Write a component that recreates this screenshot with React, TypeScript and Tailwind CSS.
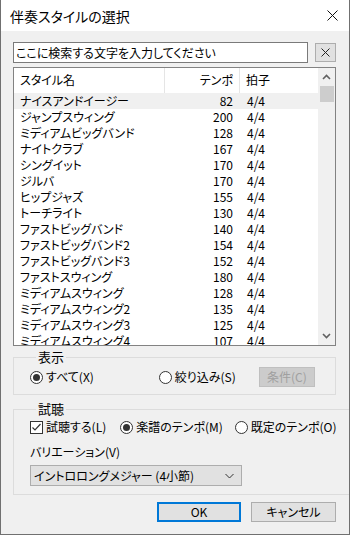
import React from "react";

const rows: [string, number][] = [
  ["ナイスアンドイージー", 82],
  ["ジャンプスウィング", 200],
  ["ミディアムビッグバンド", 128],
  ["ナイトクラブ", 167],
  ["シングイット", 170],
  ["ジルバ", 170],
  ["ヒップジャズ", 155],
  ["トーチライト", 130],
  ["ファストビッグバンド", 140],
  ["ファストビッグバンド2", 154],
  ["ファストビッグバンド3", 152],
  ["ファストスウィング", 180],
  ["ミディアムスウィング", 128],
  ["ミディアムスウィング2", 135],
  ["ミディアムスウィング3", 125],
  ["ミディアムスウィング4", 107],
];

function Radio({ checked, label }: { checked?: boolean; label: string }) {
  return (
    <div className="flex shrink-0 items-center gap-[3px]">
      <span className="flex h-[13px] w-[13px] shrink-0 items-center justify-center rounded-full border border-[#333] bg-white">
        {checked && <span className="h-[7px] w-[7px] rounded-full bg-[#333]" />}
      </span>
      <span>{label}</span>
    </div>
  );
}

export default function App() {
  return (
    <div
      className="flex h-[535px] w-[350px] flex-col overflow-hidden whitespace-nowrap border-x border-b border-[#707070] bg-[#f0f0f0] text-[12px] leading-[16px] text-black [font-feature-settings:'palt']"
      style={{ fontFamily: '"Noto Sans CJK JP", "Noto Sans", sans-serif' }}
    >
      {/* title bar */}
      <div className="flex h-[31px] shrink-0 items-center justify-between bg-white pl-[9px] pr-[11px]">
        <span className="text-[14px] text-black">伴奏スタイルの選択</span>
        <svg width="11" height="11" viewBox="0 0 11 11">
          <path d="M0.5 0.5 L10.5 10.5 M10.5 0.5 L0.5 10.5" stroke="#111" strokeWidth="1" />
        </svg>
      </div>

      <div className="flex flex-1 flex-col pl-[12px] pr-[13px]">
        {/* search */}
        <div className="mt-[11px] flex items-center gap-[6px]">
          <div className="flex h-[21px] w-[296px] items-center border border-[#7a7a7a] bg-white px-[2px] text-[12px]">
            ここに検索する文字を入力してください
          </div>
          <div className="ml-[1px] flex h-[19px] w-[21px] items-center justify-center border border-[#adadad] bg-[#e1e1e1]">
            <svg width="9" height="9" viewBox="0 0 9 9">
              <path d="M0.5 0.5 L8.5 8.5 M8.5 0.5 L0.5 8.5" stroke="#222" strokeWidth="1" />
            </svg>
          </div>
        </div>

        {/* list */}
        <div className="mt-[4px] flex h-[279px] shrink-0 border border-[#828282] bg-white">
          <div className="flex flex-1 flex-col overflow-hidden">
            <div className="flex h-[25px] shrink-0 items-center">
              <div className="h-full w-[151px] border-r border-[#e5e5e5] pl-[6px] pt-[4px]">スタイル名</div>
              <div className="h-full w-[75px] border-r border-[#e5e5e5] pr-[6px] pt-[4px] text-right">テンポ</div>
              <div className="h-full pl-[6px] pt-[4px]">拍子</div>
            </div>
            {rows.map(([n, t], i) => (
              <div
                key={i}
                className={`flex h-[16px] shrink-0 items-center ${i === 0 ? "bg-[#f0f0f0]" : ""}`}
              >
                <div className="w-[151px] pl-[6px]">{n}</div>
                <div className="w-[75px] pr-[7px] text-right">{t}</div>
                <div className="pl-[7px]">4/4</div>
              </div>
            ))}
          </div>
          <div className="flex w-[17px] flex-col items-center bg-[#f0f0f0]">
            <div className="flex h-[18px] w-full items-center justify-center">
              <svg width="9" height="6" viewBox="0 0 9 6">
                <path d="M1 5 L4.5 1.5 L8 5" stroke="#606060" strokeWidth="1.6" fill="none" />
              </svg>
            </div>
            <div className="h-[16px] w-[14px] bg-[#cdcdcd]" />
            <div className="flex-1" />
            <div className="flex h-[18px] w-full items-center justify-center">
              <svg width="9" height="6" viewBox="0 0 9 6">
                <path d="M1 1 L4.5 4.5 L8 1" stroke="#606060" strokeWidth="1.6" fill="none" />
              </svg>
            </div>
          </div>
        </div>

        {/* 表示 */}
        <fieldset className="mt-[3px] h-[46px] shrink-0 border border-[#dcdcdc] px-[16px]">
          <legend className="ml-[6px] px-[2px] text-[13px] leading-[16px]">表示</legend>
          <div className="mt-[2px] flex items-center">
            <Radio checked label="すべて(X)" />
            <div className="ml-[65px]">
              <Radio label="絞り込み(S)" />
            </div>
            <div className="ml-[23px] flex h-[20px] w-[56px] shrink-0 items-center justify-center border border-[#bfbfbf] bg-[#cccccc] text-[#a0a0a0]">
              条件(C)
            </div>
          </div>
        </fieldset>

        {/* 試聴 */}
        <fieldset className="mt-[6px] shrink-0 border border-[#dcdcdc] px-[16px] pb-[8px]">
          <legend className="ml-[6px] px-[2px] text-[13px] leading-[16px]">試聴</legend>
          <div className="mt-[2px] flex items-center">
            <div className="flex shrink-0 items-center gap-[3px]">
              <span className="flex h-[13px] w-[13px] items-center justify-center border border-[#333] bg-white">
                <svg width="11" height="11" viewBox="0 0 11 11">
                  <path d="M1.5 5.5 L4 8 L9.5 2" stroke="#333" strokeWidth="1.2" fill="none" />
                </svg>
              </span>
              <span>試聴する(L)</span>
            </div>
            <div className="ml-[14px]">
              <Radio checked label="楽譜のテンポ(M)" />
            </div>
            <div className="ml-[12px]">
              <Radio label="既定のテンポ(O)" />
            </div>
          </div>
          <div className="mt-[9px]">バリエーション(V)</div>
          <div className="mt-[5px] flex h-[21px] w-[212px] items-center justify-between border border-[#adadad] bg-[#e1e1e1] pl-[3px] pr-[7px]">
            <span>イントロロングメジャー (4小節)</span>
            <svg width="9" height="6" viewBox="0 0 9 6">
              <path d="M0.5 1 L4.5 5 L8.5 1" stroke="#333" strokeWidth="1" fill="none" />
            </svg>
          </div>
        </fieldset>

        {/* buttons */}
        <div className="mt-[7px] flex justify-end gap-[10px]">
          <div className="flex h-[20px] w-[84px] items-center justify-center border-2 border-[#0078d7] bg-[#e1e1e1]">
            OK
          </div>
          <div className="flex h-[20px] w-[85px] items-center justify-center border border-[#adadad] bg-[#e1e1e1]">
            キャンセル
          </div>
        </div>
      </div>
    </div>
  );
}
